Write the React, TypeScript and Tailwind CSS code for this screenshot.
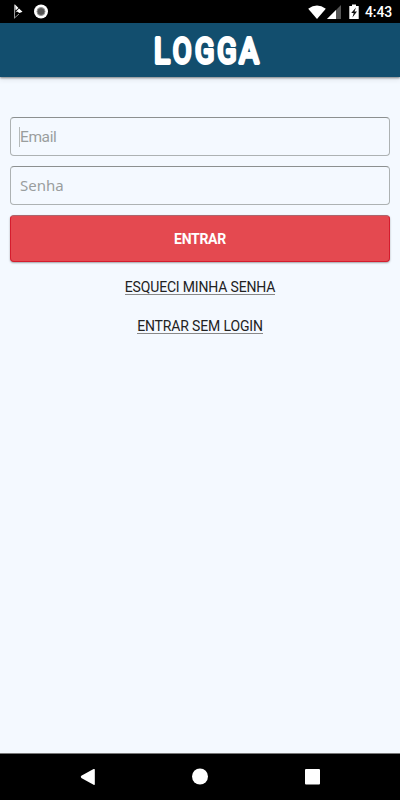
function StatusBar() {
  return (
    <div className="flex h-[23px] shrink-0 items-center justify-between bg-black pr-2 pl-3">
      <div className="flex items-center gap-[11px]">
        <svg className="h-[15px] w-[11px]" viewBox="0 0 11 15">
          <path d="M2.5 0.5V14.5" stroke="#999" strokeWidth="1" />
          <path d="M3 0.5L6.5 4L3.5 6.5Z M3 8.5L7 4.5L10.5 7.7L7.5 9L5 7.5Z" fill="#fff" />
          <path d="M3 13.5L7 10" stroke="#999" strokeWidth="1" fill="none" />
        </svg>
        <svg className="h-[15px] w-[15px]" viewBox="0 0 15 15">
          <circle cx="7" cy="7.5" r="7" fill="#fff" />
          <circle cx="7" cy="7.5" r="4" fill="#555" stroke="#999" />
        </svg>
      </div>
      <div className="flex items-center">
        <svg className="h-[16px] w-[58px]" viewBox="0 0 58 16">
          <path d="M10 15L1.2 4.7Q10 -1.8 18.8 4.7Z" fill="#fff" />
          <path d="M34 1V15H20Z" fill="#555" />
          <path d="M29 6V15H20Z" fill="#fff" />
          <path d="M42.3 2H45V0.5H49V2H51.7V15H42.3Z" fill="#fff" />
          <path d="M49 3.5L44.2 9H46.7L45.4 13.5L50 7.6H47.5Z" fill="#111" />
        </svg>
        <span className="w-[27px] pt-px font-['Roboto',sans-serif] text-[14px] leading-none font-medium tracking-[-0.1px] whitespace-nowrap text-white">
          4:43
        </span>
      </div>
    </div>
  );
}

// Each letter is condensed by its own amount
const LOGO_LETTERS = [
  { letter: "L", transform: "translate(6.9 40.2) scale(0.82 1)" },
  { letter: "O", transform: "translate(25.8 40.2) scale(0.76 1)" },
  { letter: "G", transform: "translate(48 40.2) scale(0.79 1)" },
  { letter: "G", transform: "translate(70.2 40.2) scale(0.79 1)" },
  { letter: "A", transform: "translate(92.2 40.2) scale(0.83 1)" },
];

function Logo() {
  return (
    <svg
      className="h-[54px] w-[120px] font-['Roboto',sans-serif] text-[36px] font-normal"
      viewBox="0 0 120 54"
      fill="#fff"
      stroke="#fff"
      strokeWidth="3.8"
      strokeLinejoin="round"
      role="img"
      aria-label="LOGGA"
    >
      {LOGO_LETTERS.map(({ letter, transform }) => (
        <text key={transform} transform={transform}>
          {letter}
        </text>
      ))}
    </svg>
  );
}

function NavigationBar() {
  return (
    <div className="flex h-[47px] shrink-0 items-center justify-center border-t border-[#777] bg-black">
      <svg className="h-[46px] w-[240px]" viewBox="0 0 240 46" fill="#fff">
        <path d="M1.3 21.8L13.6 15.1Q14.8 14.5 14.8 15.8V30Q14.8 31.3 13.6 30.7L1.3 24Q0.2 22.9 1.3 21.8Z" />
        <circle cx="120" cy="22.5" r="8" />
        <rect x="225" y="15" width="15" height="15.5" rx="1" />
      </svg>
    </div>
  );
}

export default function App() {
  return (
    <div className="flex h-[800px] w-[400px] flex-col overflow-hidden bg-[#f4f9ff] font-['Roboto',sans-serif]">
      <StatusBar />
      <header className="flex h-[54px] shrink-0 justify-center bg-[#124e6e] pl-[14px] shadow-[0_1px_2px_rgba(0,0,0,0.45),0_3px_5px_rgba(0,0,0,0.08)]">
        <Logo />
      </header>
      <main className="flex flex-1 flex-col items-center px-[10px] pt-10">
        <div className="flex h-[39px] w-full items-center rounded-[4px] border border-[#adb2b3] border-t-[#8c9090] pl-[8px] text-[15.5px] tracking-[-0.4px] text-[#9a9e9e]">
          <span className="h-[20px] w-px bg-[#b5baba]" />
          <span className="pt-[3px]">Email</span>
        </div>
        <div className="mt-[10px] flex h-[39px] w-full items-center rounded-[4px] border border-[#adb2b3] border-t-[#8c9090] pl-[9px] font-['Noto_Sans',sans-serif] text-[15px] text-[#9a9e9e]">
          Senha
        </div>
        <button className="mt-[10px] h-[47px] w-full shrink-0 rounded-[4px] border border-[#d51c2d] border-t-[#ac666d] bg-[#e44950] pt-[2px] text-[14px] font-bold tracking-[-0.3px] text-white shadow-[0_1px_2px_rgba(0,0,0,0.35)]">
          ENTRAR
        </button>
        <a className="mt-[17px] border-b border-[#888] pt-px text-[14px] leading-[14px] tracking-[-0.17px] text-[#222]">
          ESQUECI MINHA SENHA
        </a>
        <a className="mt-[23px] border-b border-[#888] pt-px text-[14px] leading-[14px] tracking-[-0.14px] text-[#222]">
          ENTRAR SEM LOGIN
        </a>
      </main>
      <NavigationBar />
    </div>
  );
}
